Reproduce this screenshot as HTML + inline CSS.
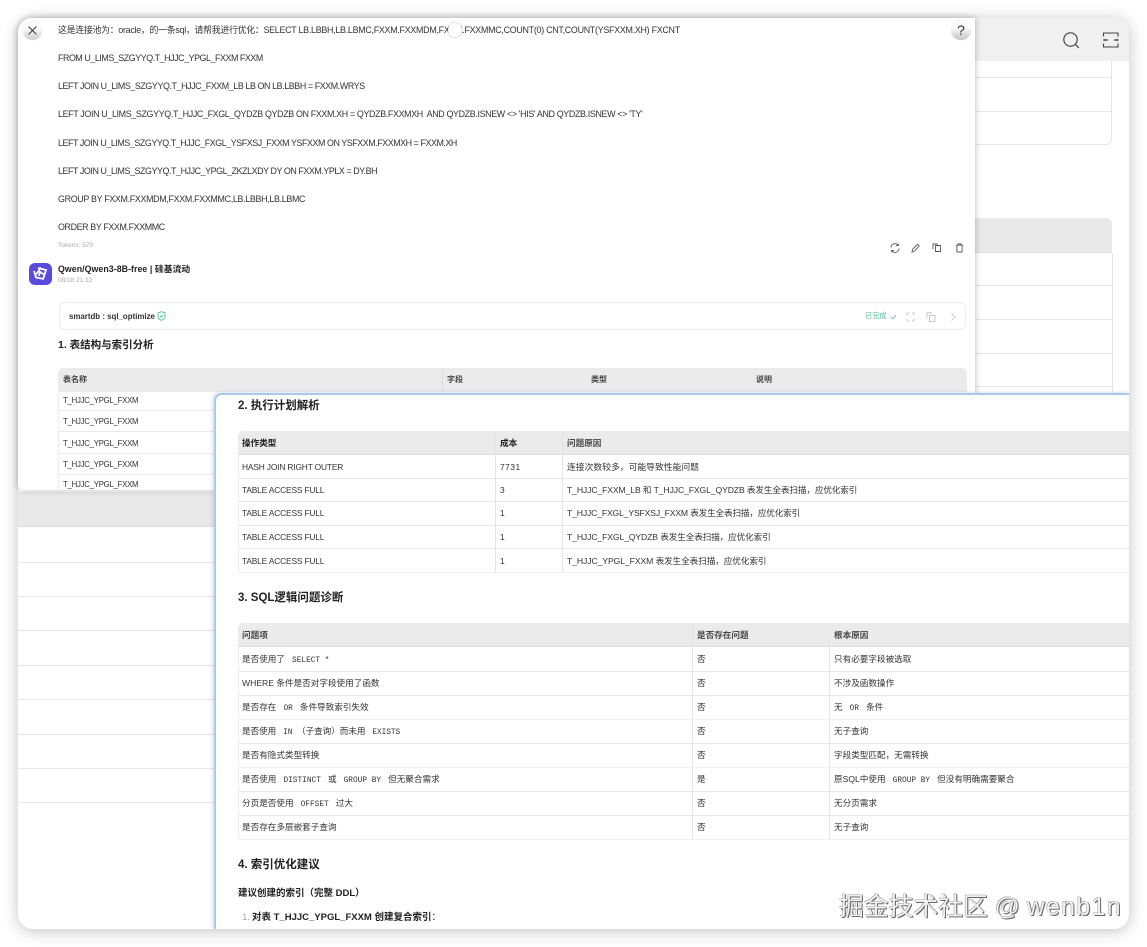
<!DOCTYPE html>
<html><head><meta charset="utf-8"><style>
html,body{margin:0;padding:0;background:#fff;width:1147px;height:947px;overflow:hidden}
*{box-sizing:border-box}
body{font-family:"Liberation Sans","Noto Sans CJK SC",sans-serif;color:#333;position:relative}
.a{position:absolute}
.t{position:absolute;white-space:pre;line-height:12px;height:12px;font-size:8.6px;color:#333;filter:blur(.35px)}
.h{position:absolute;height:1px;background:#e6e6e6}
.v{position:absolute;width:1px;background:#e4e4e4}
.m{font-family:"Liberation Mono","Noto Sans CJK SC",monospace;font-size:7.8px}
.b{font-weight:bold;color:#222}
.s{font-size:7.800px;letter-spacing:-.25px}
.l{font-size:8.400px;letter-spacing:-.16px}
.q{font-size:8.900px}
svg{position:absolute;overflow:visible}
</style></head><body>
<div class="a" id="win" style="left:18px;top:18px;width:1111px;height:911px;background:#fff;border-radius:15px;box-shadow:0 2px 16px rgba(0,0,0,.24);overflow:hidden">
 <div class="a" style="left:900px;top:-20px;width:194px;height:147px;border:1px solid #e6e6e6;border-radius:6px"></div>
 <div class="a" style="top:0;height:43px;background:#f0f0f0;left:957px;width:154px"></div>
 <div class="h" style="left:957px;top:59px;width:137px"></div>
 <div class="h" style="left:957px;top:93px;width:137px"></div>
 <div class="a" style="left:957px;top:200px;width:137px;height:35px;background:#e9e9e9;border-radius:0 6px 0 0;border-bottom:1px solid #ddd"></div>
 <div class="v" style="left:1094px;top:235px;height:160px"></div>
 <div class="h" style="left:957px;top:267px;width:137px"></div>
 <div class="h" style="left:957px;top:301px;width:137px"></div>
 <div class="h" style="left:957px;top:335px;width:137px"></div>
 <div class="h" style="left:957px;top:368px;width:137px"></div>
 <div class="a" style="left:0;top:474px;width:200px;height:35px;background:#e9e9e9;border-bottom:1px solid #ddd"></div>
 <div class="h" style="left:0;top:544px;width:200px"></div>
 <div class="h" style="left:0;top:578px;width:200px"></div>
 <div class="h" style="left:0;top:612px;width:200px"></div>
 <div class="h" style="left:0;top:647px;width:200px"></div>
 <div class="h" style="left:0;top:681px;width:200px"></div>
 <div class="h" style="left:0;top:716px;width:200px"></div>
 <div class="h" style="left:0;top:750px;width:200px"></div>
 <div class="h" style="left:0;top:784px;width:200px"></div>
</div>

<svg style="left:1062px;top:31px" width="18" height="18" viewBox="0 0 18 18" fill="none" stroke="#444" stroke-width="1.2"><circle cx="8.500" cy="8.500" r="6.700"/><path d="M13.400 13.400L16.500 16.600" stroke-linecap="round"/></svg>
<svg style="left:1102px;top:32px" width="18" height="16" viewBox="0 0 18 16" fill="none" stroke="#444" stroke-width="1.100"><path d="M1.500 4.500V1h14.500v3.500M1.500 11.500V15h14.500v-3.500"/><path d="M2 8h4M12 8h4" stroke-width="1.200"/><path d="M2.500 7l-1 1 1 1M15 7l1 1-1 1" stroke-width=".8"/></svg>

<div class="a" style="left:18px;top:18px;width:957px;height:472px;background:#fff;border-radius:14px 0 0 6px;box-shadow:0 0 7px rgba(0,0,0,.28);overflow:hidden">
 <div class="a" style="left:40px;top:350px;width:909px;height:24px;background:#ebebeb;border-radius:5px 5px 0 0"></div>
 <div class="v" style="left:424px;top:350px;height:24px;background:#ddd"></div>
 <div class="v" style="left:40px;top:372px;height:100px;background:#eee"></div>
 <div class="h" style="left:40px;top:392px;width:909px;background:#eaeaea"></div>
 <div class="h" style="left:40px;top:413px;width:909px;background:#eaeaea"></div>
 <div class="h" style="left:40px;top:435px;width:909px;background:#eaeaea"></div>
 <div class="h" style="left:40px;top:456px;width:909px;background:#eaeaea"></div>
 <div class="a" style="left:41px;top:284px;width:907px;height:28px;border:1px solid #ececec;border-radius:6px"></div>
</div>

<div class="t q" style="left:58px;top:24px;letter-spacing:-.26px">这是连接池为：oracle，的一条sql，请帮我进行优化：SELECT LB.LBBH,LB.LBMC,FXXM.FXXMDM,FXXM.FXXMMC,COUNT(0) CNT,COUNT(YSFXXM.XH) FXCNT</div>
<div class="a" style="left:448px;top:23px;width:14px;height:14px;background:#fff;border-radius:50%;box-shadow:0 0 2px rgba(0,0,0,.3)"></div>
<div class="t q" style="left:58px;top:52px;letter-spacing:-.44px">FROM U_LIMS_SZGYYQ.T_HJJC_YPGL_FXXM FXXM</div>
<div class="t q" style="left:58px;top:80px;letter-spacing:-.4px">LEFT JOIN U_LIMS_SZGYYQ.T_HJJC_FXXM_LB LB ON LB.LBBH = FXXM.WRYS</div>
<div class="t q" style="left:58px;top:108px;letter-spacing:-.34px">LEFT JOIN U_LIMS_SZGYYQ.T_HJJC_FXGL_QYDZB QYDZB ON FXXM.XH = QYDZB.FXXMXH  AND QYDZB.ISNEW &lt;&gt; 'HIS' AND QYDZB.ISNEW &lt;&gt; 'TY'</div>
<div class="t q" style="left:58px;top:137px;letter-spacing:-.43px">LEFT JOIN U_LIMS_SZGYYQ.T_HJJC_FXGL_YSFXSJ_FXXM YSFXXM ON YSFXXM.FXXMXH = FXXM.XH</div>
<div class="t q" style="left:58px;top:165px;letter-spacing:-.42px">LEFT JOIN U_LIMS_SZGYYQ.T_HJJC_YPGL_ZKZLXDY DY ON FXXM.YPLX = DY.BH</div>
<div class="t q" style="left:58px;top:193px;letter-spacing:-.31px">GROUP BY FXXM.FXXMDM,FXXM.FXXMMC,LB.LBBH,LB.LBMC</div>
<div class="t q" style="left:58px;top:221px;letter-spacing:-.37px">ORDER BY FXXM.FXXMMC</div>
<div class="t" style="left:58px;top:240px;font-size:6.500px;color:#aaa">Tokens: 570</div>

<div class="a" style="left:23px;top:21px;width:19px;height:19px;border-radius:50%;background:linear-gradient(#f6f6f6,#fff 35%,#ccc);box-shadow:0 0 1px rgba(0,0,0,.2)"></div>
<svg style="left:27px;top:25px" width="11" height="11" viewBox="0 0 11 11" stroke="#333" stroke-width=".9"><path d="M1.500 1.500l8 8M9.500 1.500l-8 8"/></svg>
<div class="a" style="left:951px;top:20px;width:20px;height:20px;border-radius:50%;background:linear-gradient(#f6f6f6,#fff 35%,#c4c4c4);box-shadow:0 0 1px rgba(0,0,0,.2);text-align:center;font-size:14px;line-height:20px;color:#333">?</div>

<svg style="left:890px;top:243px" width="75" height="10" viewBox="0 0 75 10" fill="none" stroke="#555" stroke-width=".9">
 <path d="M1 4.500A4 4 0 0 1 8 2M9 5.500A4 4 0 0 1 2 8M8.300 .5V2.600H6M1.700 9.500V7.400H4"/>
 <path d="M22 9l.5-2.500L27.500 1.300l1.700 1.700L24 8.400z"/>
 <path d="M45.500 7.500V2.500h5v6h-5zM43 6V1h5"/>
 <path d="M66 2.200h7M68 2V.8h3V2M66.900 2.400V9h5.200V2.400"/>
</svg>

<div class="a" style="left:29px;top:263px;width:23px;height:22px;background:#5a4bdf;border-radius:6px"></div>
<svg style="left:32px;top:266px" width="17" height="16" viewBox="0 0 17 16" fill="none" stroke="#fff" stroke-width="1.800"><path d="M6 2l8 2-2.500 8M2 5l2 6.500 8 1.500M4 8.500L9 1.500M8 6l5 3M7 10l1-5"/></svg>
<div class="t b" style="left:58px;top:263px;font-size:8.800px;letter-spacing:.05px">Qwen/Qwen3-8B-free | 硅基流动</div>
<div class="t" style="left:58px;top:275px;font-size:6.500px;color:#aaa">08/18 21:12</div>

<div class="t b" style="left:69px;top:311px;font-size:7.900px;color:#333">smartdb : sql_optimize</div>
<svg style="left:157px;top:311px" width="9" height="10" viewBox="0 0 9 10" fill="none" stroke="#4fc08d" stroke-width=".9"><path d="M4.500 .7L8 1.800V5.500C8 7.500 6 8.800 4.500 9.300 3 8.800 1 7.500 1 5.500V1.800z"/><path d="M2.800 4.800l1.300 1.300 2.200-2.400"/></svg>
<div class="t" style="left:865px;top:310px;font-size:7.200px;color:#55c39a">已完成</div>
<svg style="left:890px;top:312px" width="70" height="10" viewBox="0 0 70 10" fill="none" stroke="#bbb" stroke-width=".8">
 <path d="M.800 5l2 1.800L6 3.200" stroke="#55c39a"/>
 <path d="M17 3V1h2M22 1h2v2M24 7v2h-2M19 9h-2V7"/>
 <path d="M39.500 3.500h5.500v6h-5.500zM37 6.500V.8h5"/>
 <path d="M61.500 1.500l3.500 3.500-3.500 3.500"/>
</svg>

<div class="t b" style="left:58px;top:339px;font-size:10.500px">1. 表结构与索引分析</div>
<div class="t b" style="left:63px;top:374px;color:#444;font-size:8px">表名称</div>
<div class="t b" style="left:447px;top:374px;color:#444;font-size:8px">字段</div>
<div class="t b" style="left:591px;top:374px;color:#444;font-size:8px">类型</div>
<div class="t b" style="left:756px;top:374px;color:#444;font-size:8px">说明</div>
<div class="t s" style="left:63px;top:395px">T_HJJC_YPGL_FXXM</div>
<div class="t s" style="left:63px;top:416px">T_HJJC_YPGL_FXXM</div>
<div class="t s" style="left:63px;top:438px">T_HJJC_YPGL_FXXM</div>
<div class="t s" style="left:63px;top:459px">T_HJJC_YPGL_FXXM</div>
<div class="a" style="left:58px;top:479px;width:156px;height:11px;overflow:hidden"><div class="t s" style="left:5px;top:0">T_HJJC_YPGL_FXXM</div></div>

<div class="a" style="left:214px;top:393px;width:915px;height:536px;background:#fff;border-left:2px solid #a9c9e8;border-top:2px solid #a9c9e8;border-radius:8px 0 15px 0;box-shadow:-2px -1px 3px rgba(120,150,190,.25);overflow:hidden">
 <div class="a" style="left:22px;top:36px;width:893px;height:24px;background:#ebebeb;border-radius:5px 0 0 0;border-bottom:1px solid #ddd"></div>
 <div class="v" style="left:22px;top:60px;height:118px;background:#eee"></div>
 <div class="v" style="left:279px;top:36px;height:142px"></div>
 <div class="v" style="left:346px;top:36px;height:142px"></div>
 <div class="h" style="left:22px;top:83px;width:893px"></div>
 <div class="h" style="left:22px;top:106px;width:893px"></div>
 <div class="h" style="left:22px;top:130px;width:893px"></div>
 <div class="h" style="left:22px;top:153px;width:893px"></div>
 <div class="h" style="left:22px;top:177px;width:893px;background:#f2f2f2"></div>
 <div class="a" style="left:22px;top:228px;width:893px;height:24px;background:#ebebeb;border-radius:5px 0 0 0;border-bottom:1px solid #ddd"></div>
 <div class="v" style="left:22px;top:252px;height:192px;background:#eee"></div>
 <div class="v" style="left:476px;top:228px;height:216px"></div>
 <div class="v" style="left:613px;top:228px;height:216px"></div>
 <div class="h" style="left:22px;top:276px;width:893px"></div>
 <div class="h" style="left:22px;top:300px;width:893px"></div>
 <div class="h" style="left:22px;top:324px;width:893px;background:#f1f1f1"></div>
 <div class="h" style="left:22px;top:348px;width:893px"></div>
 <div class="h" style="left:22px;top:372px;width:893px;background:#f1f1f1"></div>
 <div class="h" style="left:22px;top:396px;width:893px"></div>
 <div class="h" style="left:22px;top:420px;width:893px"></div>
 <div class="h" style="left:22px;top:444px;width:893px;background:#f0f0f0"></div>
</div>

<div class="t b" style="left:238px;top:400px;font-size:11.500px">2. 执行计划解析</div>
<div class="t b" style="left:242px;top:437px;font-size:8.600px">操作类型</div>
<div class="t b" style="left:500px;top:437px;font-size:8.600px">成本</div>
<div class="t b" style="left:567px;top:437px;font-size:8.600px;color:#444">问题原因</div>
<div class="t l" style="left:242px;top:461px">HASH JOIN RIGHT OUTER</div><div class="t l" style="left:500px;top:461px;letter-spacing:.5px">7731</div><div class="t" style="left:567px;top:461px;font-size:8.800px">连接次数较多，可能导致性能问题</div>
<div class="t l" style="left:242px;top:484px">TABLE ACCESS FULL</div><div class="t l" style="left:500px;top:484px">3</div><div class="t" style="left:567px;top:484px;letter-spacing:-.1px">T_HJJC_FXXM_LB 和 T_HJJC_FXGL_QYDZB 表发生全表扫描，应优化索引</div>
<div class="t l" style="left:242px;top:507px">TABLE ACCESS FULL</div><div class="t l" style="left:500px;top:507px">1</div><div class="t" style="left:567px;top:507px;letter-spacing:-.14px">T_HJJC_FXGL_YSFXSJ_FXXM 表发生全表扫描，应优化索引</div>
<div class="t l" style="left:242px;top:531px">TABLE ACCESS FULL</div><div class="t l" style="left:500px;top:531px">1</div><div class="t" style="left:567px;top:531px;letter-spacing:-.1px">T_HJJC_FXGL_QYDZB 表发生全表扫描，应优化索引</div>
<div class="t l" style="left:242px;top:555px">TABLE ACCESS FULL</div><div class="t l" style="left:500px;top:555px">1</div><div class="t" style="left:567px;top:555px;letter-spacing:-.07px">T_HJJC_YPGL_FXXM 表发生全表扫描，应优化索引</div>

<div class="t b" style="left:238px;top:592px;font-size:11.500px">3. SQL逻辑问题诊断</div>
<div class="t b" style="left:242px;top:629px;font-size:8.600px;color:#444">问题项</div>
<div class="t b" style="left:697px;top:629px;font-size:8.600px;color:#444">是否存在问题</div>
<div class="t b" style="left:834px;top:629px;font-size:8.600px;color:#444">根本原因</div>

<div class="t" style="left:242px;top:653px">是否使用了 <span class="m"> SELECT * </span></div><div class="t" style="left:697px;top:653px">否</div><div class="t" style="left:834px;top:653px">只有必要字段被选取</div>
<div class="t" style="left:242px;top:677px">WHERE 条件是否对字段使用了函数</div><div class="t" style="left:697px;top:677px">否</div><div class="t" style="left:834px;top:677px">不涉及函数操作</div>
<div class="t" style="left:242px;top:701px">是否存在 <span class="m"> OR </span> 条件导致索引失效</div><div class="t" style="left:697px;top:701px">否</div><div class="t" style="left:834px;top:701px">无 <span class="m"> OR </span> 条件</div>
<div class="t" style="left:242px;top:725px;letter-spacing:-.05px">是否使用 <span class="m"> IN </span>（子查询）而未用 <span class="m"> EXISTS</span></div><div class="t" style="left:697px;top:725px">否</div><div class="t" style="left:834px;top:725px">无子查询</div>
<div class="t" style="left:242px;top:749px">是否有隐式类型转换</div><div class="t" style="left:697px;top:749px">否</div><div class="t" style="left:834px;top:749px">字段类型匹配，无需转换</div>
<div class="t" style="left:242px;top:773px">是否使用 <span class="m"> DISTINCT </span> 或 <span class="m"> GROUP BY </span> 但无聚合需求</div><div class="t" style="left:697px;top:773px">是</div><div class="t" style="left:834px;top:773px">原SQL中使用 <span class="m"> GROUP BY </span> 但没有明确需要聚合</div>
<div class="t" style="left:242px;top:797px">分页是否使用 <span class="m"> OFFSET </span> 过大</div><div class="t" style="left:697px;top:797px">否</div><div class="t" style="left:834px;top:797px">无分页需求</div>
<div class="t" style="left:242px;top:821px">是否存在多层嵌套子查询</div><div class="t" style="left:697px;top:821px">否</div><div class="t" style="left:834px;top:821px">无子查询</div>

<div class="t b" style="left:238px;top:859px;font-size:11.500px">4. 索引优化建议</div>
<div class="t b" style="left:238px;top:888px;font-size:9.500px">建议创建的索引（完整 DDL）</div>
<div class="t" style="left:242px;top:912px;font-size:9.500px;color:#aaa">1.</div>
<div class="t b" style="left:252px;top:912px;font-size:9.500px">对表 T_HJJC_YPGL_FXXM 创建复合索引<span style="font-weight:normal">：</span></div>

<div class="a" style="left:839px;top:893px;white-space:pre;font-size:24.800px;line-height:30px;color:#f1f1f1;text-shadow:1px 1px 0 #666,-.5px -.5px 0 #999,1px 0 0 #888;font-family:'Liberation Sans','Noto Sans CJK SC',sans-serif">掘金技术社区 @ <span style="letter-spacing:1.400px">wenb1n</span></div>
</body></html>
